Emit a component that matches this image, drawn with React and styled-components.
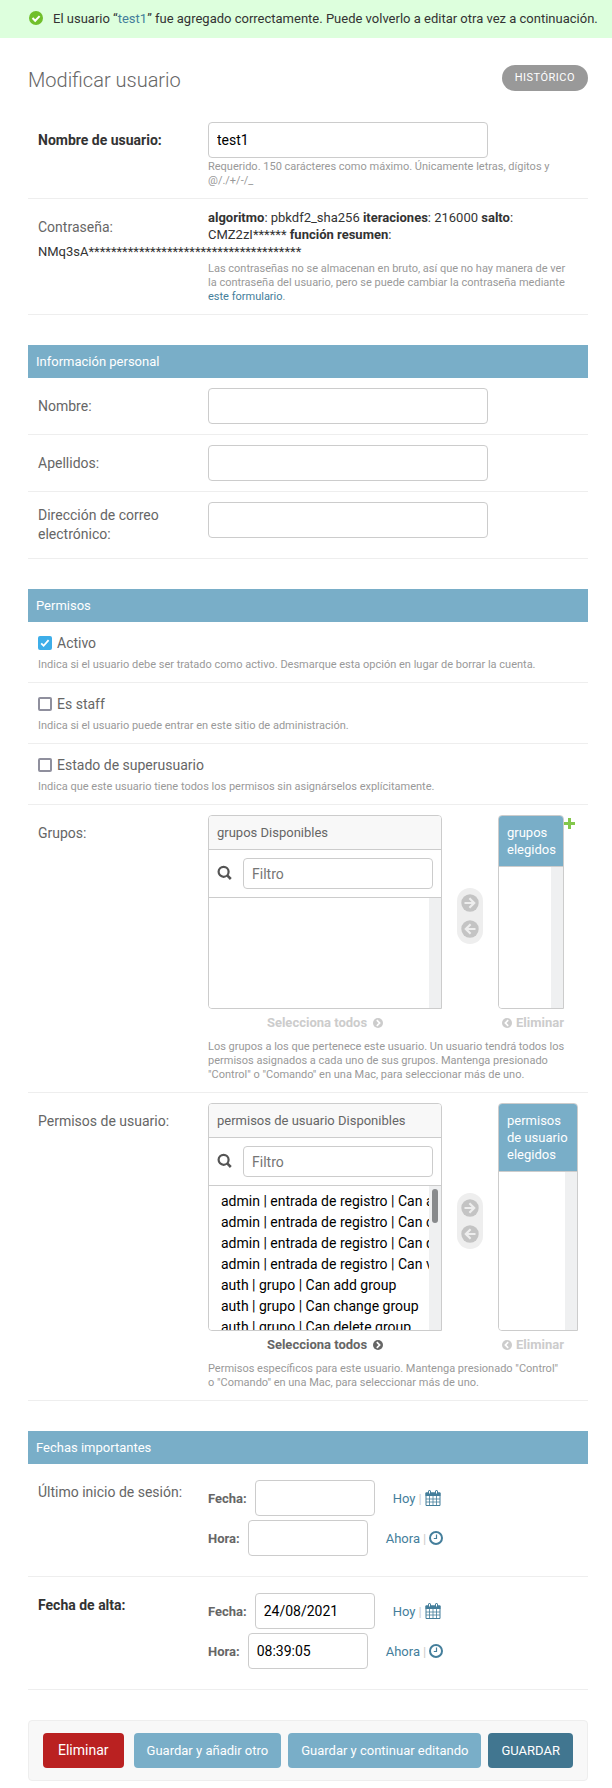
import React from "react";
import styled, { createGlobalStyle, css } from "styled-components";

const Global = createGlobalStyle`
  * { box-sizing: border-box; }
  body {
    margin: 0;
    background: #fff;
    color: #333;
    font: 13px/17px Roboto, "Liberation Sans", sans-serif;
  }
  input, button, select { font-family: inherit; }
  a { color: #447e9b; text-decoration: none; }
`;

const Message = styled.div`
  display: flex;
  align-items: center;
  gap: 10px;
  min-height: 38px;
  padding: 0 8px 2px 29px;
  background: #dfd;
  svg { flex: none; }
`;

const Content = styled.main`
  padding: 24px 24px 7px 28px;
`;

const TitleBar = styled.header`
  display: flex;
  justify-content: space-between;
  align-items: flex-start;
  height: 50px;
  padding-top: 3px;
`;

const Title = styled.h1`
  margin: 3px 0 0;
  font-size: 20px;
  line-height: 24px;
  font-weight: 300;
  color: #666;
`;

const HistoryLink = styled.a`
  padding: 0 13px;
  border-radius: 15px;
  background: #999;
  color: #fff;
  font-size: 11px;
  line-height: 26px;
  letter-spacing: 0.5px;
  text-transform: uppercase;
`;

const Module = styled.fieldset`
  margin: 0 0 30px;
  padding: 0;
  border: 0;
  min-width: 0;
`;

const ModuleTitle = styled.h2`
  margin: 0;
  padding: 8px;
  background: #79aec8;
  color: #fff;
  font-size: 13px;
  line-height: 17px;
  font-weight: 400;
`;

const Row = styled.div`
  display: flow-root;
  padding: 10px;
  border-bottom: 1px solid #eee;
`;

const FieldLabel = styled.label`
  float: left;
  width: 170px;
  padding: ${(p) => (p.$double ? "4px 10px 4px 0" : "8px 10px 0 0")};
  color: ${(p) => (p.$required ? "#333" : "#666")};
  font-size: 14px;
  line-height: ${(p) => (p.$double ? "19px" : "20px")};
  font-weight: ${(p) => (p.$required ? 700 : 400)};
`;

const Field = styled.div`
  margin-left: 170px;
`;

const Meta = styled(Field)`
  padding-right: 40px;
`;

const Help = styled.div`
  margin: ${(p) => (p.$check ? "4px 0 0" : "2px 0 0 170px")};
  color: #999;
  font-size: 11px;
  line-height: 14px;
`;

const TextInput = styled.input`
  display: block;
  width: ${(p) => (p.$short ? "120px" : "280px")};
  height: 36px;
  padding: 0 8px;
  border: 1px solid #ccc;
  border-radius: 4px;
  background: #fff;
  color: #000;
  font-size: 14px;
`;

const CheckLine = styled.div`
  display: flex;
  align-items: center;
  gap: 5px;
  height: 22px;
  color: #666;
  font-size: 14px;
`;

const Checkbox = styled.input`
  appearance: none;
  width: 14px;
  height: 14px;
  margin: 0;
  border: 2px solid #8f8f9d;
  border-radius: 2px;
  background: #fff;
  &:checked {
    border-color: #3daee9;
    background: #3daee9
      url("data:image/svg+xml,%3Csvg xmlns='http://www.w3.org/2000/svg' viewBox='0 0 10 10'%3E%3Cpath d='M1.2 5.4l2.4 2.4 5-5.6' fill='none' stroke='white' stroke-width='1.8'/%3E%3C/svg%3E")
      center / 10px no-repeat;
  }
`;

const Selector = styled.div`
  display: flex;
  margin-left: 170px;
`;

const Column = styled.div`
  display: flex;
  flex-direction: column;
  min-width: 0;
  flex: ${(p) => (p.$wide ? "0 1 234px" : "1 1 0")};
  max-width: 234px;
`;

const Panel = styled.div`
  display: flex;
  flex-direction: column;
  flex: 1 0 auto;
  overflow: hidden;
  border: 1px solid #ccc;
  border-radius: 4px 4px 0 4px;
`;

const PanelTitle = styled.h3`
  margin: 0;
  padding: 8px;
  border-bottom: 1px solid #ccc;
  background: ${(p) => (p.$chosen ? "#79aec8" : "#f8f8f8")};
  color: ${(p) => (p.$chosen ? "#fff" : "#666")};
  font-size: 13px;
  line-height: 17px;
  font-weight: 400;
`;

const Filter = styled.div`
  display: flex;
  align-items: center;
  padding: 8px;
  border-bottom: 1px solid #ccc;
  label { width: 26px; height: 18px; }
  svg { display: block; }
`;

const FilterInput = styled.input`
  flex: 1;
  min-width: 0;
  height: 31px;
  padding: 0 8px;
  border: 1px solid #ccc;
  border-radius: 4px;
  font-size: 14px;
  &::placeholder { color: #757575; }
`;

const ListArea = styled.div`
  display: flex;
  flex: 1 0 ${(p) => p.$height || "60px"};
`;

const List = styled.select`
  flex: 1;
  min-width: 0;
  height: auto;
  max-height: ${(p) => p.$height || "none"};
  padding: 7px 0 0;
  border: 0;
  outline: 0;
  overflow: hidden;
  background: #fff;
  color: #000;
  font-size: 14px;
  option {
    min-height: 21px;
    padding: 0 0 0 12px;
    line-height: 21px;
  }
`;

const Track = styled.div`
  width: 12px;
  padding: 3px;
  background: #eff0f1;
`;

const Thumb = styled.div`
  height: 34px;
  border-radius: 3px;
  background: #888a8c;
`;

const ChooseLink = styled.a`
  display: flex;
  justify-content: ${(p) => (p.$remove ? "flex-start" : "center")};
  align-items: center;
  gap: ${(p) => (p.$remove ? "4px" : "6px")};
  height: 26px;
  margin-bottom: 3px;
  padding-left: ${(p) => (p.$remove ? "4px" : "0")};
  color: ${(p) => (p.$active ? "#666" : "#ccc")};
  font-weight: 700;
  white-space: nowrap;
  svg { margin-top: 2px; flex: none; }
`;

const Movers = styled.div`
  display: flex;
  flex-direction: column;
  align-items: center;
  align-self: center;
  gap: 8px;
  flex: 0 0 26px;
  margin: 0 15px 22px;
  padding: 6px 0;
  border-radius: 13px;
  background: #eee;
`;

const Mover = styled.button`
  display: block;
  width: 18px;
  height: 18px;
  padding: 0;
  border: 0;
  background: none;
  svg { display: block; }
`;

const AddLink = styled.a`
  flex: 0 0 14px;
  padding: 3px 0 0;
  svg { display: block; }
`;

const DateTime = styled.div`
  display: grid;
  gap: 4px;
  margin-left: 170px;
  padding: 6px 0 10px;
`;

const DateLine = styled.div`
  display: flex;
  align-items: center;
  label {
    margin-right: 8px;
    color: #666;
    font-weight: 700;
  }
`;

const Shortcuts = styled.span`
  display: flex;
  align-items: center;
  gap: 3px;
  margin-left: 18px;
  color: #ccc;
  a, svg { display: block; }
`;

const SubmitRow = styled.div`
  display: flex;
  gap: 7px;
  padding: 12px 14px;
  border: 1px solid #eee;
  border-radius: 4px;
  background: #f8f8f8;
  white-space: nowrap;
`;

const tone = {
  plain: css`background: #79aec8;`,
  main: css`background: #417690; text-transform: uppercase;`,
};

const Submit = styled.button`
  height: 35px;
  padding: 0 13px;
  border: 0;
  border-radius: 4px;
  color: #fff;
  font-size: 13px;
  ${(p) => tone[p.$tone]}
`;

const DeleteLink = styled.a`
  height: 35px;
  margin-right: auto;
  padding: 0 15px;
  border-radius: 4px;
  background: #ba2121;
  color: #fff;
  font-size: 14px;
  line-height: 35px;
`;

const SuccessIcon = () => (
  <svg width="14" height="14" viewBox="0 0 14 14" aria-hidden="true">
    <circle cx="7" cy="7" r="7" fill="#70bf2b" />
    <path d="M3.5 7l2.7 2.7 4.4-4.6" fill="none" stroke="#fff" strokeWidth="2" />
  </svg>
);

const SearchIcon = () => (
  <svg width="16" height="16" viewBox="0 0 16 16" fill="none" stroke="#555" aria-hidden="true">
    <circle cx="6.6" cy="6.8" r="5" strokeWidth="2.2" />
    <path d="M10.2 10.4l3.6 3.6" strokeWidth="2.6" />
  </svg>
);

const ArrowIcon = ({ left }) => (
  <svg width="18" height="18" viewBox="0 0 18 18" aria-hidden="true">
    <circle cx="9" cy="9" r="8.7" fill="#c4c4c4" />
    <path
      d={left ? "M14.5 9H5M9.6 4.2L4.8 9l4.8 4.8" : "M3.5 9H13M8.4 4.2L13.2 9l-4.8 4.8"}
      fill="none"
      stroke="#eee"
      strokeWidth="2.2"
    />
  </svg>
);

const ChevronIcon = ({ left }) => (
  <svg width="10" height="10" viewBox="0 0 10 10" aria-hidden="true">
    <circle cx="5" cy="5" r="5" fill="currentColor" />
    <path d={left ? "M6.2 2.2L3.4 5l2.8 2.8" : "M3.8 2.2L6.6 5 3.8 7.8"} fill="none" stroke="#fff" strokeWidth="1.7" />
  </svg>
);

const PlusIcon = () => (
  <svg width="11" height="11" viewBox="0 0 11 11" aria-hidden="true">
    <path d="M5.5 0v11M0 5.5h11" stroke="#83c74b" strokeWidth="3" />
  </svg>
);

const CalendarIcon = () => (
  <svg width="16" height="16" viewBox="0 0 16 16" aria-hidden="true">
    <path d="M1 3h14v12.5H1z" fill="#fff" stroke="#447e9b" />
    <path d="M.5 2.5h15V6H.5z" fill="#447e9b" />
    <path d="M4.5 6v9.5M8 6v9.5M11.5 6v9.5M1 9h14M1 12h14" stroke="#447e9b" strokeWidth=".8" />
    <path d="M4.5 1.5v2M11.5 1.5v2" stroke="#447e9b" strokeWidth="3" strokeLinecap="round" />
    <path d="M4.5 1v2.5M11.5 1v2.5" stroke="#fff" strokeWidth="1" />
  </svg>
);

const ClockIcon = () => (
  <svg width="14" height="14" viewBox="0 0 14 14" fill="none" stroke="#447e9b" aria-hidden="true">
    <circle cx="7" cy="7" r="6" strokeWidth="2" />
    <path d="M7.5 3.5v4H4.8" strokeWidth="1.2" />
  </svg>
);

function TextRow({ id, label, required, double, value, help }) {
  return (
    <Row>
      <FieldLabel htmlFor={id} $required={required} $double={double}>{label}</FieldLabel>
      <Field><TextInput id={id} type="text" defaultValue={value} /></Field>
      {help && <Help>{help}</Help>}
    </Row>
  );
}

function CheckRow({ id, label, checked, help }) {
  return (
    <Row>
      <CheckLine>
        <Checkbox type="checkbox" id={id} defaultChecked={checked} />
        <label htmlFor={id}>{label}</label>
      </CheckLine>
      <Help $check>{help}</Help>
    </Row>
  );
}

function SelectorRow({ id, label, name, options = [], height, addable, help }) {
  const filled = options.length > 0;
  return (
    <Row>
      <FieldLabel htmlFor={id}>{label}</FieldLabel>
      <Selector>
        <Column $wide>
          <Panel>
            <PanelTitle>{name} Disponibles</PanelTitle>
            <Filter>
              <label htmlFor={id + "_filter"} aria-label="Filtro"><SearchIcon /></label>
              <FilterInput id={id + "_filter"} type="text" placeholder="Filtro" />
            </Filter>
            <ListArea $height={height}>
              <List id={id} multiple $height={height}>
                {options.map((o) => <option key={o}>{o}</option>)}
              </List>
              <Track>{filled && <Thumb />}</Track>
            </ListArea>
          </Panel>
          <ChooseLink href="#" $active={filled}>Selecciona todos <ChevronIcon /></ChooseLink>
        </Column>
        <Movers>
          <Mover type="button" aria-label="Elegir"><ArrowIcon /></Mover>
          <Mover type="button" aria-label="Eliminar"><ArrowIcon left /></Mover>
        </Movers>
        <Column>
          <Panel>
            <PanelTitle $chosen>{name} elegidos</PanelTitle>
            <ListArea>
              <List multiple aria-label={name + " elegidos"} />
              <Track />
            </ListArea>
          </Panel>
          <ChooseLink href="#" $remove><ChevronIcon left /> Eliminar</ChooseLink>
        </Column>
        {addable && <AddLink href="#" aria-label="Agregar"><PlusIcon /></AddLink>}
      </Selector>
      <Help>{help}</Help>
    </Row>
  );
}

function DateRow({ id, label, required, date, time }) {
  return (
    <Row>
      <FieldLabel as="div" $required={required}>{label}</FieldLabel>
      <DateTime>
        <DateLine>
          <label htmlFor={id + "_0"}>Fecha:</label>
          <TextInput $short id={id + "_0"} type="text" defaultValue={date} />
          <Shortcuts><a href="#">Hoy</a>|<a href="#" aria-label="Calendario"><CalendarIcon /></a></Shortcuts>
        </DateLine>
        <DateLine>
          <label htmlFor={id + "_1"}>Hora:</label>
          <TextInput $short id={id + "_1"} type="text" defaultValue={time} />
          <Shortcuts><a href="#">Ahora</a>|<a href="#" aria-label="Reloj"><ClockIcon /></a></Shortcuts>
        </DateLine>
      </DateTime>
    </Row>
  );
}

const permissions = [
  "admin | entrada de registro | Can add log entry",
  "admin | entrada de registro | Can change log entry",
  "admin | entrada de registro | Can delete log entry",
  "admin | entrada de registro | Can view log entry",
  "auth | grupo | Can add group",
  "auth | grupo | Can change group",
  "auth | grupo | Can delete group",
];

export default function App() {
  return (
    <>
      <Global />
      <Message role="status">
        <SuccessIcon />
        <span>
          El usuario “<a href="#">test1</a>” fue agregado correctamente. Puede volverlo a editar otra vez a continuación.
        </span>
      </Message>
      <Content>
        <TitleBar>
          <Title>Modificar usuario</Title>
          <HistoryLink href="#">Histórico</HistoryLink>
        </TitleBar>
        <form onSubmit={(e) => e.preventDefault()}>
          <Module>
            <TextRow
              id="username"
              label="Nombre de usuario:"
              required
              value="test1"
              help="Requerido. 150 carácteres como máximo. Únicamente letras, dígitos y @/./+/-/_"
            />
            <Row>
              <FieldLabel as="div">Contraseña:</FieldLabel>
              <Meta>
                <strong>algoritmo</strong>: pbkdf2_sha256 <strong>iteraciones</strong>: 216000 <strong>salto</strong>:
                {" "}CMZ2zI****** <strong>función resumen</strong>:
              </Meta>
              <div>NMq3sA**************************************</div>
              <Help>
                Las contraseñas no se almacenan en bruto, así que no hay manera de ver la&nbsp;contraseña del usuario,
                pero se puede cambiar la contraseña mediante <a href="#">este&nbsp;formulario</a>.
              </Help>
            </Row>
          </Module>

          <Module>
            <ModuleTitle>Información personal</ModuleTitle>
            <TextRow id="first_name" label="Nombre:" />
            <TextRow id="last_name" label="Apellidos:" />
            <TextRow id="email" label="Dirección de correo electrónico:" double />
          </Module>

          <Module>
            <ModuleTitle>Permisos</ModuleTitle>
            <CheckRow
              id="is_active"
              label="Activo"
              checked
              help="Indica si el usuario debe ser tratado como activo. Desmarque esta opción en lugar de borrar la cuenta."
            />
            <CheckRow
              id="is_staff"
              label="Es staff"
              help="Indica si el usuario puede entrar en este sitio de administración."
            />
            <CheckRow
              id="is_superuser"
              label="Estado de superusuario"
              help="Indica que este usuario tiene todos los permisos sin asignárselos explícitamente."
            />
            <SelectorRow
              id="groups"
              label="Grupos:"
              name="grupos"
              height="110px"
              addable
              help={'Los grupos a los que pertenece este usuario. Un usuario tendrá todos los permisos asignados a cada uno de sus grupos. Mantenga presionado "Control" o "Comando" en una Mac, para seleccionar más de uno.'}
            />
            <SelectorRow
              id="permissions"
              label="Permisos de usuario:"
              name="permisos de usuario"
              height="144px"
              options={permissions}
              help={'Permisos específicos para este usuario. Mantenga presionado "Control" o\u00a0"Comando" en una Mac, para seleccionar más de uno.'}
            />
          </Module>

          <Module>
            <ModuleTitle>Fechas importantes</ModuleTitle>
            <DateRow id="last_login" label="Último inicio de sesión:" />
            <DateRow id="date_joined" label="Fecha de alta:" required date="24/08/2021" time="08:39:05" />
          </Module>

          <SubmitRow>
            <DeleteLink href="#">Eliminar</DeleteLink>
            <Submit type="submit" $tone="plain">Guardar y añadir otro</Submit>
            <Submit type="submit" $tone="plain">Guardar y continuar editando</Submit>
            <Submit type="submit" $tone="main">Guardar</Submit>
          </SubmitRow>
        </form>
      </Content>
    </>
  );
}
